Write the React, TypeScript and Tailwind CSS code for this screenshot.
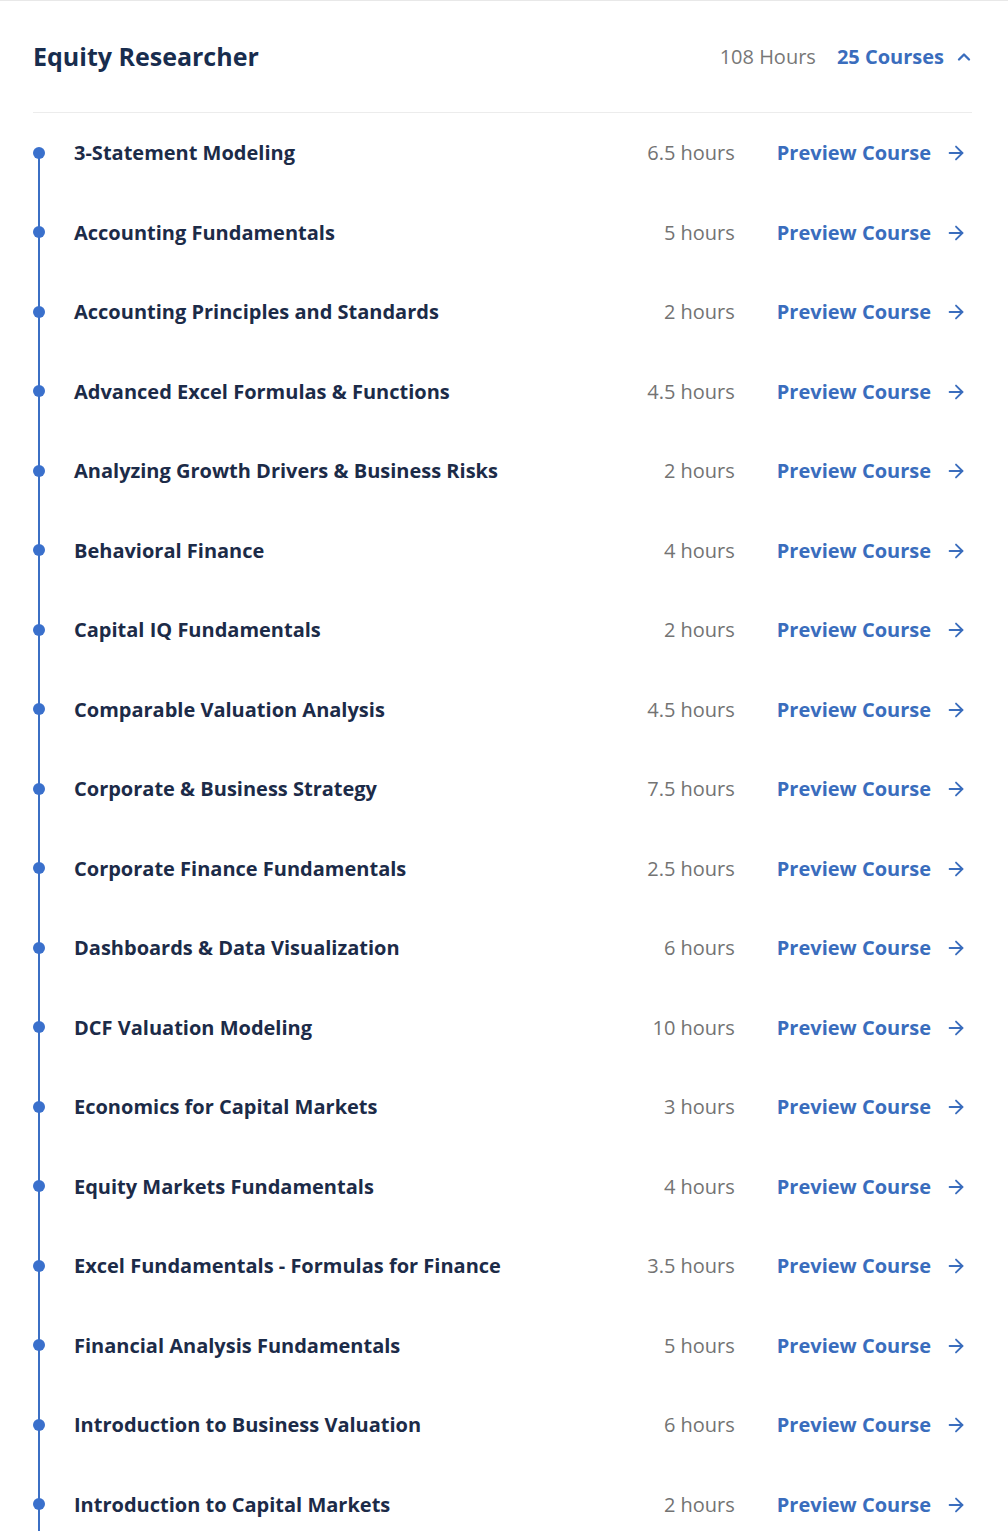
import { ChevronUp, ArrowRight } from 'lucide-react';

const courses: [string, string][] = [
  ['3-Statement Modeling', '6.5 hours'],
  ['Accounting Fundamentals', '5 hours'],
  ['Accounting Principles and Standards', '2 hours'],
  ['Advanced Excel Formulas & Functions', '4.5 hours'],
  ['Analyzing Growth Drivers & Business Risks', '2 hours'],
  ['Behavioral Finance', '4 hours'],
  ['Capital IQ Fundamentals', '2 hours'],
  ['Comparable Valuation Analysis', '4.5 hours'],
  ['Corporate & Business Strategy', '7.5 hours'],
  ['Corporate Finance Fundamentals', '2.5 hours'],
  ['Dashboards & Data Visualization', '6 hours'],
  ['DCF Valuation Modeling', '10 hours'],
  ['Economics for Capital Markets', '3 hours'],
  ['Equity Markets Fundamentals', '4 hours'],
  ['Excel Fundamentals - Formulas for Finance', '3.5 hours'],
  ['Financial Analysis Fundamentals', '5 hours'],
  ['Introduction to Business Valuation', '6 hours'],
  ['Introduction to Capital Markets', '2 hours'],
];

function CourseRow({ title, hours, first }: { title: string; hours: string; first: boolean }) {
  return (
    <div className="flex h-[79.5px] items-center">
      <div className="relative h-full w-[41px] shrink-0">
        {/* timeline segment */}
        <div
          className={
            first
              ? 'absolute left-[5px] top-1/2 bottom-0 w-[2px] bg-[#3b6fc4]'
              : 'absolute left-[5px] top-0 bottom-0 w-[2px] bg-[#3b6fc4]'
          }
        />
        <div className="absolute left-0 top-1/2 h-3 w-3 -translate-y-1/2 rounded-full bg-[#3a70cc]" />
      </div>
      <div className="flex-1 pt-px text-[20px] font-bold text-[#1c2b48]">{title}</div>
      <div className="w-[120px] pt-px text-right text-[20px] text-[#737373]">{hours}</div>
      <a href="#" className="ml-[42px] flex items-center pt-px text-[20px] font-bold text-[#3a6dbd]">
        Preview Course
        <ArrowRight className="ml-[14px] h-[22px] w-[22px]" strokeWidth={2} />
      </a>
      <div className="w-[5px]" />
    </div>
  );
}

export default function App() {
  return (
    <div
      className="h-[1531px] overflow-hidden border-t border-[#e8e8e8] bg-white pl-[33px] pr-[36px]"
      style={{ fontFamily: '"Open Sans", sans-serif' }}
    >
      <div className="flex h-[112px] items-center justify-between border-b border-[#ececec]">
        <h2 className="text-[25px] font-bold text-[#182d4e]">Equity Researcher</h2>
        <div className="flex items-center">
          <span className="text-[20px] text-[#777777]">108 Hours</span>
          <span className="ml-[21px] text-[20px] font-bold text-[#3a6dbd]">25 Courses</span>
          <ChevronUp className="-mr-[2px] ml-[10px] h-5 w-5 text-[#3a6dbd]" strokeWidth={2.8} />
        </div>
      </div>
      <div>
        {courses.map(([t, h], i) => (
          <CourseRow key={t} title={t} hours={h} first={i === 0} />
        ))}
      </div>
    </div>
  );
}
